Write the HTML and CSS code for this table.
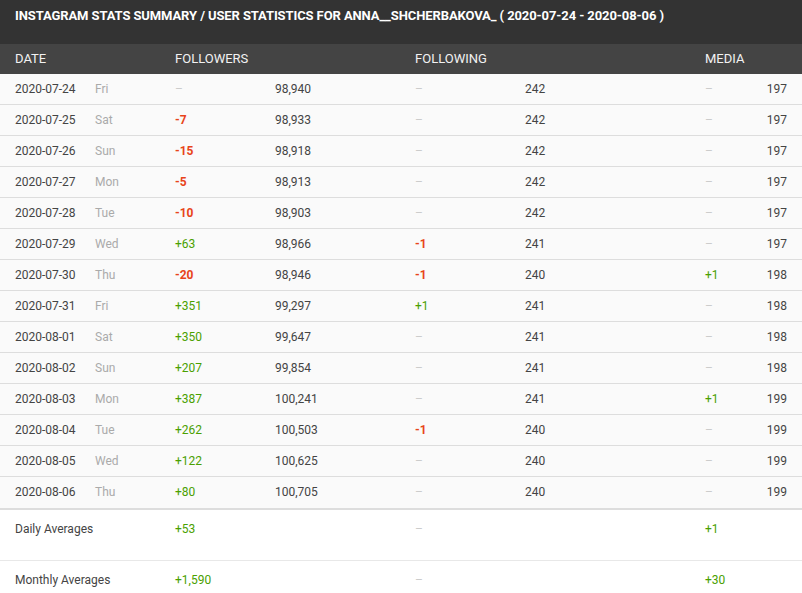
FILE: index.html
```html
<!DOCTYPE html>
<html lang="en">
<head>
    <meta charset="UTF-8">
    <title>Instagram Stats Summary</title>
    <link rel="stylesheet" href="styles.css">
</head>
<body>
    <div class="stats">
        <div class="title">INSTAGRAM STATS SUMMARY / USER STATISTICS FOR ANNA__SHCHERBAKOVA_ ( 2020-07-24 - 2020-08-06 )</div>
        <div class="row head">
            <span>DATE</span>
            <span></span>
            <span class="span2">FOLLOWERS</span>
            <span class="span2">FOLLOWING</span>
            <span class="span2">MEDIA</span>
        </div>
        <div id="rows"></div>
        <div class="row avg">
            <span class="span2">Daily Averages</span>
            <span class="up span2">+53</span>
            <span class="none span2">–</span>
            <span class="up span2">+1</span>
        </div>
        <div class="row avg">
            <span class="span2">Monthly Averages</span>
            <span class="up span2">+1,590</span>
            <span class="none span2">–</span>
            <span class="up span2">+30</span>
        </div>
    </div>
    <script type="text/javascript">
        var data = [
            ["2020-07-24","Fri","","98,940","","242","","197"],
            ["2020-07-25","Sat","-7","98,933","","242","","197"],
            ["2020-07-26","Sun","-15","98,918","","242","","197"],
            ["2020-07-27","Mon","-5","98,913","","242","","197"],
            ["2020-07-28","Tue","-10","98,903","","242","","197"],
            ["2020-07-29","Wed","+63","98,966","-1","241","","197"],
            ["2020-07-30","Thu","-20","98,946","-1","240","+1","198"],
            ["2020-07-31","Fri","+351","99,297","+1","241","","198"],
            ["2020-08-01","Sat","+350","99,647","","241","","198"],
            ["2020-08-02","Sun","+207","99,854","","241","","198"],
            ["2020-08-03","Mon","+387","100,241","","241","+1","199"],
            ["2020-08-04","Tue","+262","100,503","-1","240","","199"],
            ["2020-08-05","Wed","+122","100,625","","240","","199"],
            ["2020-08-06","Thu","+80","100,705","","240","","199"]
        ];
        function change(v){
            if(v === "") return '<span class="none">–</span>';
            return '<span class="' + (v.charAt(0) == "-" ? "down" : "up") + '">' + v + '</span>';
        }
        var html = "";
        for(var i = 0; i < data.length; i++){
            var d = data[i];
            html += '<div class="row day">' +
                '<span>' + d[0] + '</span>' +
                '<span class="wd">' + d[1] + '</span>' +
                change(d[2]) + '<span>' + d[3] + '</span>' +
                change(d[4]) + '<span>' + d[5] + '</span>' +
                change(d[6]) + '<span class="num">' + d[7] + '</span>' +
                '</div>';
        }
        document.getElementById("rows").innerHTML = html;
    </script>
</body>
</html>
```

FILE: styles.css
```css
*{margin:0;padding:0;box-sizing:border-box;}
body {
    font-family: Roboto, "Liberation Sans", sans-serif;
    font-size: 12px;
    color: #444;
    background: #fff;
}
.stats {
    width: 802px;
}
.title {
    height: 44px;
    padding: 8px 15px 0;
    line-height: 16px;
    font-size: 13px;
    font-weight: bold;
    letter-spacing: -0.1px;
    color: #fff;
    background: #333;
}
.row {
    display: grid;
    grid-template-columns: 80px 80px 100px 140px 110px 180px 60px 1fr;
    padding: 0 15px;
    line-height: 16px;
}
.span2 {
    grid-column: span 2;
}
.head {
    height: 30px;
    padding-top: 7px;
    font-size: 13px;
    color: #f2f2f2;
    background: #444;
}
.day {
    height: 31px;
    padding-top: 7px;
    background: #fafafa;
    border-bottom: 1px solid #ddd;
}
.day:last-child {
    height: 33px;
    border-bottom: 2px solid #ddd;
}
.wd {
    color: #aaa;
}
.num {
    text-align: right;
}
.none {
    color: #ccc;
}
.up {
    color: #4aa000;
}
.down {
    color: #e8441a;
    font-weight: bold;
}
.avg {
    height: 51px;
    padding-top: 11px;
    border-bottom: 1px solid #e8e8e8;
}
```
